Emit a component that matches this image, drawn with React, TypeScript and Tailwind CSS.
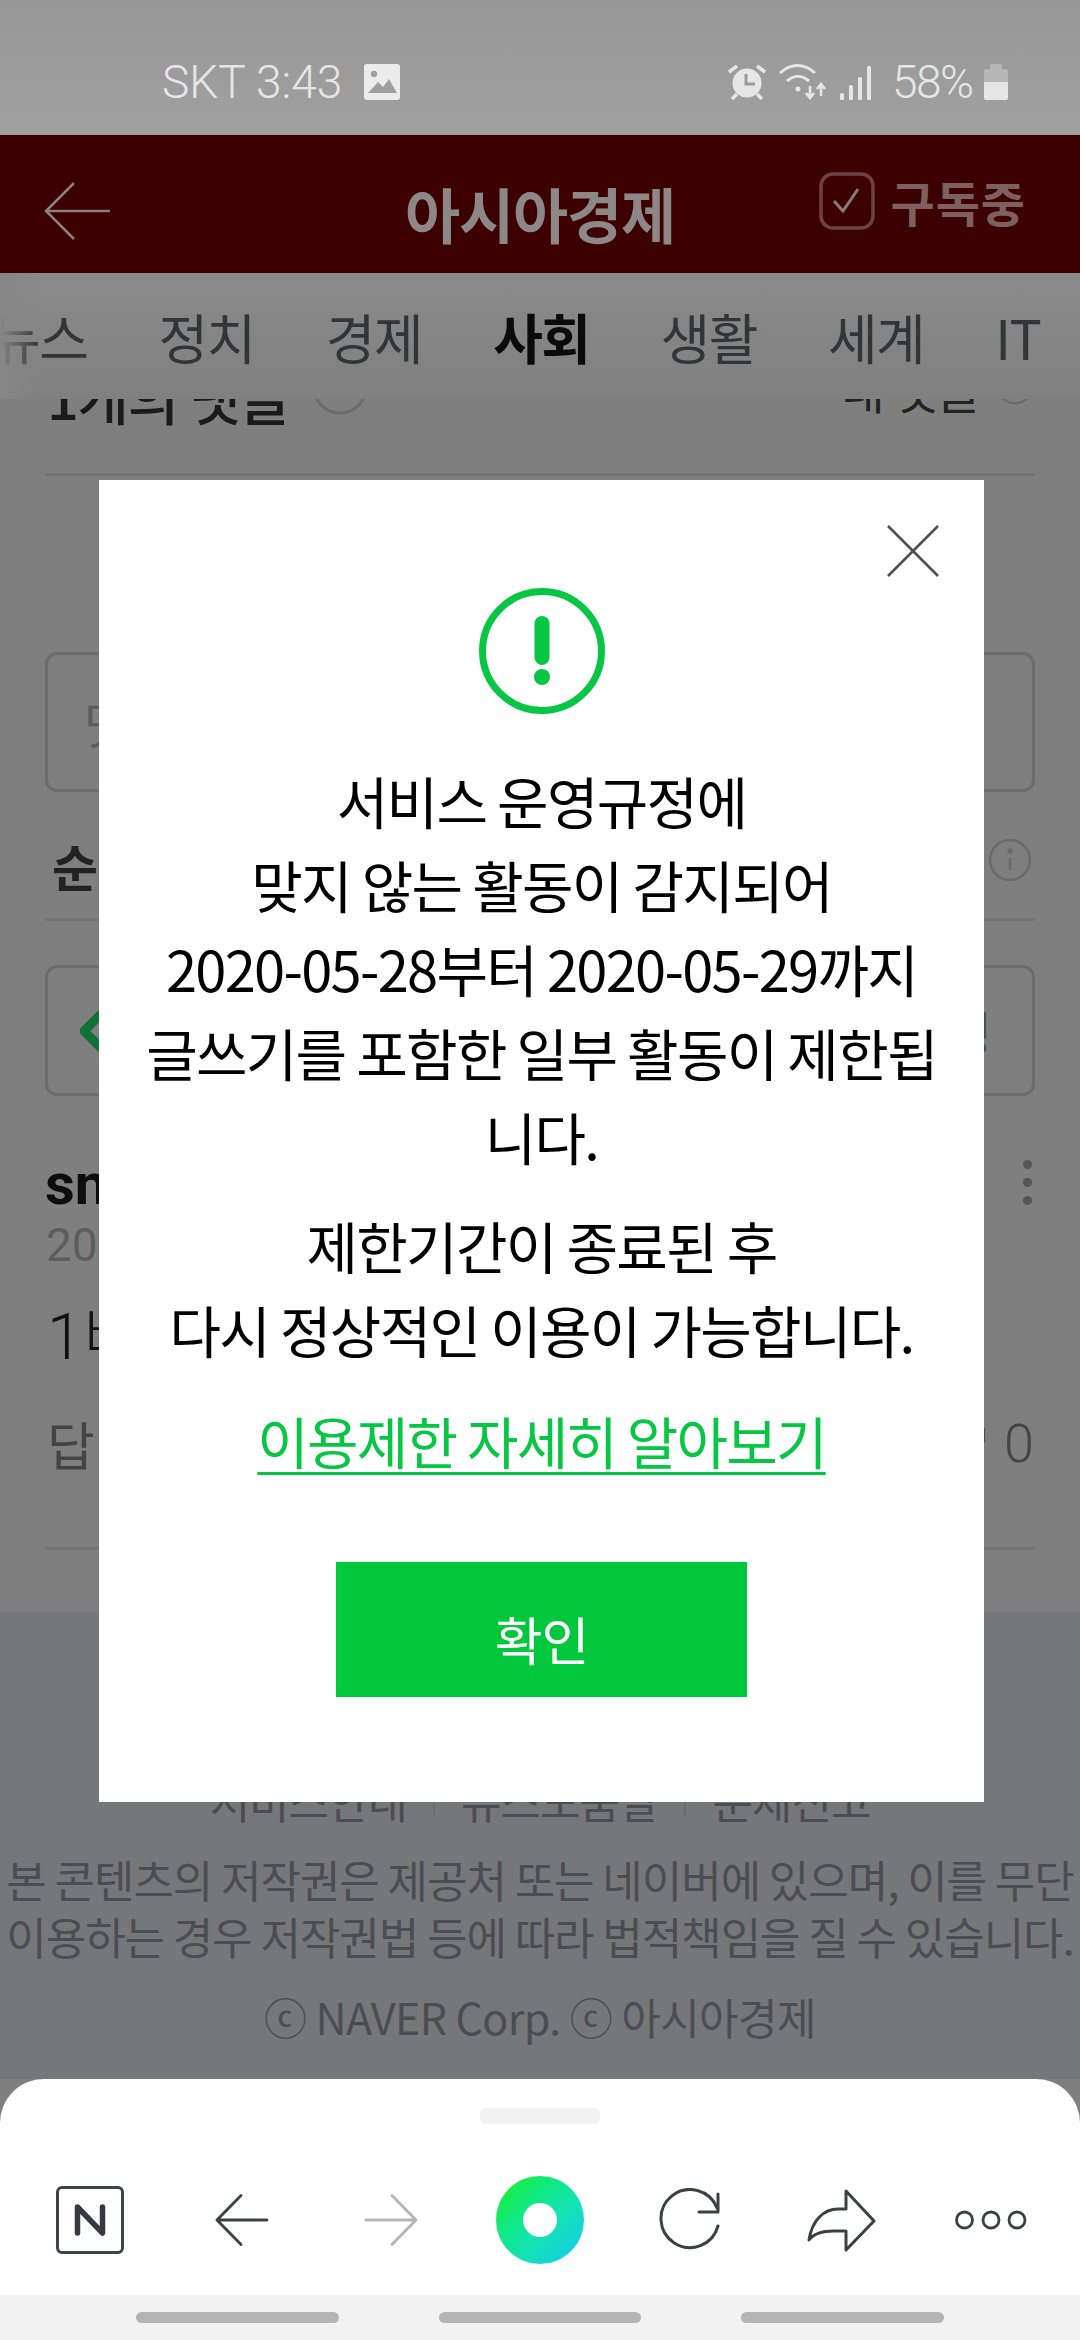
const KR = "font-['Noto_Sans_CJK_KR','Noto_Sans',sans-serif]";

function Info({ className = "" }: { className?: string }) {
  return (
    <svg viewBox="0 0 44 44" className={className} fill="none" stroke="#6a6a6a" strokeWidth="2.5">
      <circle cx="22" cy="22" r="20" />
      <path d="M22 20v12" />
      <circle cx="22" cy="13" r="1.5" fill="#6a6a6a" />
    </svg>
  );
}

function StatusBar() {
  return (
    <div className="h-[135px] shrink-0 bg-gradient-to-b from-[#979797] to-[#a0a0a0] flex items-center justify-between pl-[162px] pr-[72px] pt-[29px] text-[#e6e6e6] font-['Roboto',sans-serif] text-[46px] font-light">
      <div className="flex items-center gap-[22px]">
        <span>SKT 3:43</span>
        <svg viewBox="0 0 36 36" className="w-[36px] h-[36px]">
          <rect width="36" height="36" rx="3" fill="#ececec" />
          <circle cx="10" cy="10" r="3.2" fill="#a0a0a0" />
          <path d="M4 29l10-11 5 5 6-8 8 14z" fill="#a0a0a0" />
        </svg>
      </div>
      <div className="flex items-center">
        <svg viewBox="0 0 38 36" className="w-[38px] h-[36px]" fill="none">
          <circle cx="19" cy="19" r="14.5" fill="#e6e6e6" />
          <path d="M18 10v10h9" stroke="#999" strokeWidth="3" />
          <path d="M1 8l8-6M37 8l-8-6M9 30l-5 5M29 30l5 5" stroke="#e6e6e6" strokeWidth="3.5" />
        </svg>
        <svg viewBox="0 0 48 36" className="w-[48px] h-[36px] ml-[13px]" fill="none" stroke="#e6e6e6" strokeWidth="3">
          <path d="M1 9c11-10 24-10 35 0" />
          <path d="M8 17c7-6 15-6 22 0" />
          <circle cx="19" cy="25" r="2.5" fill="#e6e6e6" stroke="none" />
          <path d="M31 22v12M42 21v11M27 29l4 5 4-5M38 25l4-5 4 5" strokeWidth="2.6" />
        </svg>
        <svg viewBox="0 0 31 34" className="w-[31px] h-[34px] ml-[13px] mt-[1px]" fill="#e6e6e6">
          <rect x="0" y="27" width="4" height="7" rx="1.5" />
          <rect x="9" y="19" width="4" height="15" rx="1.5" />
          <rect x="18" y="11" width="4" height="23" rx="1.5" />
          <rect x="27" y="0" width="4" height="34" rx="1.5" />
        </svg>
        <span className="ml-[21px] w-[78px] whitespace-nowrap tracking-[-1.5px]">58%</span>
        <svg viewBox="0 0 24 36" className="w-[24px] h-[36px] ml-[14px]">
          <rect x="6" y="0" width="12" height="6" rx="1" fill="#b7b7b7" />
          <path d="M2 5h20a2 2 0 0 1 2 2v11H0V7a2 2 0 0 1 2-2z" fill="#b7b7b7" />
          <path d="M0 18h24v16a2 2 0 0 1-2 2H2a2 2 0 0 1-2-2z" fill="#e6e6e6" />
        </svg>
      </div>
    </div>
  );
}

function Header() {
  return (
    <div className="h-[138px] shrink-0 bg-[#3d0000] grid grid-cols-[1fr_auto_1fr] items-center">
      <div className="pl-[44px] pt-[14px]">
        <svg viewBox="0 0 68 58" className="w-[68px] h-[58px]" fill="none" stroke="#8c7f7f" strokeWidth="2.5">
          <path d="M30 1L2 29l28 28M2 29h64" />
        </svg>
      </div>
      <div className={`${KR} text-[60px] font-bold text-[#8d8787] tracking-[-1.2px] pt-[18px] leading-none`}>아시아경제</div>
      <div className="flex items-center justify-end pr-[54px] pb-[6px]">
        <svg viewBox="0 0 56 58" className="w-[56px] h-[58px]" fill="none">
          <rect x="2" y="2" width="52" height="54" rx="12" stroke="#6b4343" strokeWidth="3.5" />
          <path d="M15 29l9 10 15-22" stroke="#8a7a7a" strokeWidth="3" />
        </svg>
        <span className={`${KR} ml-[16px] text-[48px] font-bold text-[#7f6060] tracking-[1px] leading-none`}>구독중</span>
      </div>
    </div>
  );
}

function Tabs() {
  const items = ["정치", "경제", "사회", "생활", "세계", "IT"];
  return (
    <div className={`relative h-[126px] shrink-0 bg-gradient-to-b from-[#8a8a8a] to-[#808080] overflow-hidden flex items-center gap-[71px] ${KR} text-[54px] tracking-[-1.5px] text-[#333436] whitespace-nowrap`}>
      <span className="-ml-[9px]">뉴스</span>
      {items.map((t) => (
        <span key={t} className={t === "사회" ? "font-bold text-[#0b0b0b]" : ""}>{t}</span>
      ))}
      <div className="absolute left-0 top-0 h-full w-[40px] bg-gradient-to-r from-[#868686] to-transparent" />
    </div>
  );
}

function Content() {
  return (
    <div className={`h-[1213px] shrink-0 overflow-hidden bg-[#7f7f7f] px-[45px] ${KR}`}>
      <div className="-mt-[40px] h-[117px] border-b-[3px] border-[#747474] flex items-start justify-between whitespace-nowrap">
        <div className="flex items-start gap-[22px] text-[56px] leading-[66px] font-medium text-[#1a1a1a] tracking-[-1.3px] pl-[2px]">
          <span className="pt-[4px]">1개의 댓글</span>
          <svg viewBox="0 0 56 56" className="w-[56px] h-[56px]" fill="none" stroke="#6c6c6c" strokeWidth="3">
            <circle cx="28" cy="28" r="26" />
            <path d="M14 24c6 8 22 8 28 0" stroke="#444" />
          </svg>
        </div>
        <div className="flex items-center gap-[16px] text-[48px] leading-[56px] text-[#222] tracking-[-1px] pt-[1px] pr-[1px]">
          <span>내 댓글</span>
          <Info className="w-[38px] h-[38px] -mt-[4px]" />
        </div>
      </div>
      <div className="mt-[176px] h-[140px] rounded-[12px] border-[3px] border-[#6c6c6c] flex items-center pl-[36px] text-[50px] text-[#5c5c5c]">
        <span>맛</span>
      </div>
      <div className="mt-[40px] h-[89px] border-b-[3px] border-[#747474] flex items-start justify-between text-[50px] leading-[66px] font-bold text-[#222]">
        <span className="pl-[7px]">순</span>
        <Info className="w-[44px] h-[44px] mt-[6px] mr-[3px]" />
      </div>
      <div className="mt-[44px] h-[131px] rounded-[12px] border-[3px] border-[#6c6c6c] flex items-center justify-between pl-[32px] pr-[40px] text-[48px] text-[#4c4c4c]">
        <svg viewBox="0 0 46 46" className="w-[46px] h-[46px]" fill="none">
          <path d="M23 4L42 23 23 42 4 23z" stroke="#0f7237" strokeWidth="9" strokeLinejoin="round" />
        </svg>
        <span>설정</span>
      </div>
      <div className="mt-[58px] flex items-start justify-between font-['Roboto',sans-serif]">
        <div>
          <div className="text-[58px] leading-[60px] font-bold text-[#0d0d0d]">sn</div>
          <div className="text-[46px] leading-[50px] mt-[6px] pl-[1px] text-[#5d5d5d]">20</div>
        </div>
        <div className="flex flex-col gap-[9px] pt-[6px] pr-[3px]">
          <span className="w-[9px] h-[9px] rounded-full bg-[#555]" />
          <span className="w-[9px] h-[9px] rounded-full bg-[#555]" />
          <span className="w-[9px] h-[9px] rounded-full bg-[#555]" />
        </div>
      </div>
      <div className="mt-[32px] text-[64px] leading-[72px] text-[#111] font-['Roboto','Noto_Sans_CJK_KR',sans-serif] font-light pl-[2px]">1비</div>
      <div className="mt-[39px] flex items-center justify-between text-[52px] leading-[62px] text-[#444] pr-[1px]">
        <span className="pl-[2px]">답</span>
        <span className="flex items-center gap-[14px] font-['Roboto',sans-serif] text-[54px] font-light">
          <span className={`${KR} text-[30px] -mt-[22px]`}>ㅁ</span>0
        </span>
      </div>
      <div className="mt-[72px] border-b-[3px] border-[#747474]" />
    </div>
  );
}

function Footer() {
  return (
    <div className={`h-[467px] shrink-0 bg-[#76777b] ${KR} flex flex-col items-center justify-end pb-[38px] text-[#4c4d52] whitespace-nowrap`}>
      <div className="flex items-center gap-[26px] text-[44px] tracking-[-1px] leading-[50px]">
        <span>서비스안내</span>
        <span className="w-[2px] h-[30px] bg-[#6a6b6f]" />
        <span>뉴스도움말</span>
        <span className="w-[2px] h-[30px] bg-[#6a6b6f]" />
        <span>문제신고</span>
      </div>
      <div className="mt-[26px] text-[44px] leading-[57px] tracking-[-1.05px] text-center">
        <div>본 콘텐츠의 저작권은 제공처 또는 네이버에 있으며, 이를 무단</div>
        <div>이용하는 경우 저작권법 등에 따라 법적책임을 질 수 있습니다.</div>
      </div>
      <div className="mt-[26px] text-[43px] leading-[50px] tracking-[-0.6px]">ⓒ NAVER Corp. ⓒ 아시아경제</div>
    </div>
  );
}

function Toolbar() {
  return (
    <div className="flex-1 bg-white rounded-t-[44px] flex flex-col items-center">
      <div className="mt-[29px] w-[120px] h-[16px] rounded-[6px] bg-[#f2f2f2]" />
      <div className="mt-[51px] w-full h-[90px] grid grid-cols-7 px-[15px] items-center justify-items-center">
        <div className="w-[68px] h-[68px] rounded-[6px] border-[3px] border-[#3f4347] flex items-center justify-center">
          <svg viewBox="0 0 32 32" className="w-[32px] h-[32px]" fill="none" stroke="#343a42" strokeWidth="5.5" strokeLinecap="round" strokeLinejoin="round">
            <path d="M3.5 29V3l25 26V3" />
          </svg>
        </div>
        <svg viewBox="0 0 54 52" className="w-[54px] h-[52px] ml-[4px]" fill="none" stroke="#3c4043" strokeWidth="2.8" strokeLinecap="round" strokeLinejoin="round">
          <path d="M26 1.5L2 26l24 24.5M2 26h50" />
        </svg>
        <svg viewBox="0 0 54 52" className="w-[54px] h-[52px] ml-[1px]" fill="none" stroke="#b4b4b4" strokeWidth="2.8" strokeLinecap="round" strokeLinejoin="round">
          <path d="M28 1.5L52 26 28 50.5M2 26h50" />
        </svg>
        <div className="w-[88px] h-[88px] rounded-full bg-gradient-to-br from-[#18ee45] from-15% via-[#15e2b4] via-60% to-[#1cc7f0] flex items-center justify-center">
          <div className="w-[34px] h-[34px] rounded-full bg-white" />
        </div>
        <svg viewBox="0 0 64 64" className="w-[64px] h-[64px]" fill="none" stroke="#3c4043" strokeWidth="3" strokeLinecap="round" strokeLinejoin="round">
          <path d="M60 38A29 29 0 1 1 59 20" />
          <path d="M60 6v18H41" />
        </svg>
        <svg viewBox="0 0 72 64" className="w-[72px] h-[64px]" fill="none" stroke="#3c4043" strokeWidth="3" strokeLinejoin="round">
          <path d="M42 3l28 30-28 29V43H30C20 43 10 45 5 52 8 32 20 21 34 21h8z" />
        </svg>
        <svg viewBox="0 0 72 24" className="w-[72px] h-[24px] ml-[1px]" fill="none" stroke="#3c4043" strokeWidth="2.8">
          <circle cx="9.5" cy="12" r="8" />
          <circle cx="36" cy="12" r="8" />
          <circle cx="62" cy="12" r="8" />
        </svg>
      </div>
    </div>
  );
}

function GestureBar() {
  return (
    <div className="h-[45px] shrink-0 bg-[#f2f2f2] grid grid-cols-3 gap-[100px] px-[136px] pt-[17px]">
      <div className="h-[11px] rounded-full bg-[#b4b4b4]" />
      <div className="h-[11px] rounded-full bg-[#b4b4b4]" />
      <div className="h-[11px] rounded-full bg-[#b4b4b4]" />
    </div>
  );
}

function Modal() {
  return (
    <div className={`absolute left-[99px] top-[480px] w-[885px] h-[1322px] bg-white flex flex-col items-center ${KR} text-black whitespace-nowrap`}>
      <svg viewBox="0 0 52 52" className="absolute right-[45px] top-[45px] w-[52px] h-[52px]" fill="none" stroke="#4f4f4f" strokeWidth="2.6">
        <path d="M1 1l50 50M51 1L1 51" />
      </svg>
      <svg viewBox="0 0 126 126" className="mt-[108px] w-[126px] h-[126px]" fill="none">
        <circle cx="63" cy="63" r="59.5" stroke="#06c644" strokeWidth="7" />
        <path d="M63 35.5v34" stroke="#06c644" strokeWidth="15" strokeLinecap="round" />
        <circle cx="63" cy="89" r="8" fill="#06c644" />
      </svg>
      <div className="mt-[44px] text-[56px] leading-[84px] tracking-[-1.7px] text-center">
        <div>서비스 운영규정에</div>
        <div>맞지 않는 활동이 감지되어</div>
        <div>2020-05-28부터 2020-05-29까지</div>
        <div>글쓰기를 포함한 일부 활동이 제한됩</div>
        <div>니다.</div>
      </div>
      <div className="mt-[25px] text-[56px] leading-[84px] tracking-[-1.7px] text-center">
        <div>제한기간이 종료된 후</div>
        <div>다시 정상적인 이용이 가능합니다.</div>
      </div>
      <a className="mt-[32px] text-[56px] leading-[74px] tracking-[-1.8px] text-[#06c644] underline underline-offset-[8px] decoration-[3px]">이용제한 자세히 알아보기</a>
      <button className="mt-[85px] w-[411px] h-[135px] bg-[#00c73c] text-white text-[52px] tracking-[-1px] pt-[18px]">확인</button>
    </div>
  );
}

export default function App() {
  return (
    <div className="relative w-[1080px] h-[2340px] overflow-hidden flex flex-col bg-[#7f7f7f]">
      <StatusBar />
      <Header />
      <Tabs />
      <Content />
      <Footer />
      <Toolbar />
      <GestureBar />
      <Modal />
    </div>
  );
}
